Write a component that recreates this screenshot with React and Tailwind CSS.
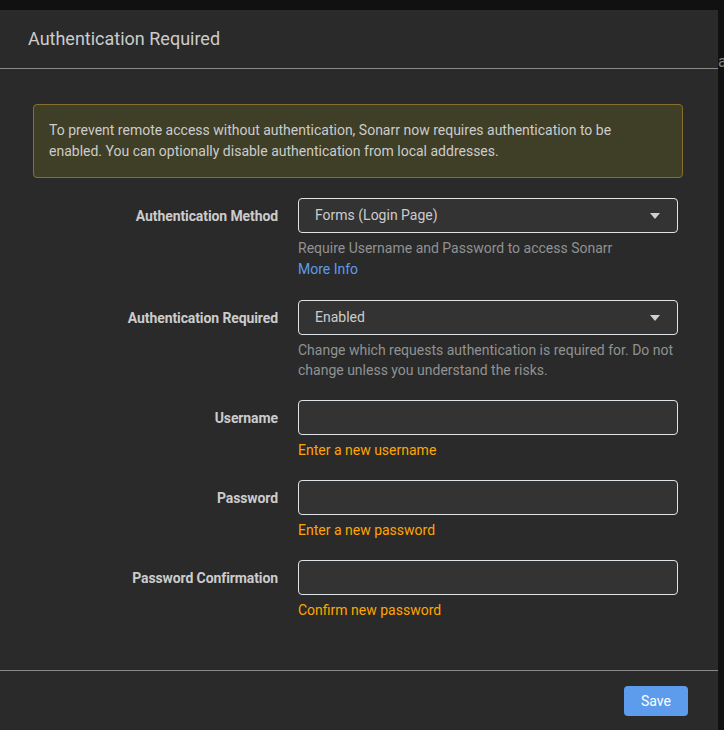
import React from "react";

function Caret() {
  return (
    <svg width="10" height="6" viewBox="0 0 10 6" className="shrink-0">
      <path d="M0 0 L10 0 L5 6 Z" fill="#d0d0d0" />
    </svg>
  );
}

function Row({ label, children }) {
  return (
    <div className="flex mb-[20px]">
      <div className="w-[245px] shrink-0 pt-[1px] text-right font-bold tracking-[-0.1px] text-[#cccccc] leading-[35px] text-[14px]">
        {label}
      </div>
      <div className="ml-[20px] w-[380px]">{children}</div>
    </div>
  );
}

function Select({ value }) {
  return (
    <div className="h-[35px] rounded-[4px] border border-[#dde3e6] bg-[#333333] flex items-center justify-between pl-[16px] pr-[17px] text-[14px] text-[#cccccc]">
      <span>{value}</span>
      <Caret />
    </div>
  );
}

function Input() {
  return <div className="h-[35px] rounded-[4px] border border-[#dde3e6] bg-[#333333]" />;
}

function Help({ children, className = "" }) {
  return <div className={`mt-[5px] text-[14px] leading-[20px] ${className}`}>{children}</div>;
}

export default function App() {
  return (
    <div
      className="w-[724px] h-[730px] overflow-hidden bg-[#111111] pt-[10px] flex"
      style={{ fontFamily: "Roboto, 'Liberation Sans', sans-serif" }}
    >
      <div className="w-[718px] shrink-0 bg-[#2a2a2a] flex flex-col">
        <div className="h-[59px] flex items-center pl-[28px] pb-[2px] border-b border-[#8a8a8a] text-[18px] text-[#cccccc]">
          Authentication Required
        </div>
        <div className="pt-[35px] pl-[33px] pb-[30px]">
          <div className="w-[650px] rounded-[4px] border border-[#87702e] bg-[#3f3e27] px-[15px] py-[15px] text-[14px] leading-[21px] text-[#cccccc]">
            To prevent remote access without authentication, Sonarr now requires authentication to be
            enabled. You can optionally disable authentication from local addresses.
          </div>
          <div className="mt-[20px]">
            <Row label="Authentication Method">
              <Select value="Forms (Login Page)" />
              <Help className="text-[#909293]">
                Require Username and Password to access Sonarr
                <div className="text-[#5d9cec] mt-[1px] leading-[21px]">More Info</div>
              </Help>
            </Row>
            <Row label="Authentication Required">
              <Select value="Enabled" />
              <Help className="text-[#909293]">
                Change which requests authentication is required for. Do not change unless you understand the risks.
              </Help>
            </Row>
            <Row label="Username">
              <Input />
              <Help className="text-[#ffa500]">Enter a new username</Help>
            </Row>
            <Row label="Password">
              <Input />
              <Help className="text-[#ffa500]">Enter a new password</Help>
            </Row>
            <Row label="Password Confirmation">
              <Input />
              <Help className="text-[#ffa500]">Confirm new password</Help>
            </Row>
          </div>
        </div>
        <div className="border-t border-[#8a8a8a] flex justify-end pt-[15px] pr-[30px]">
          <button className="h-[30px] w-[64px] rounded-[4px] bg-[#5d9cec] text-white text-[14px]">
            Save
          </button>
        </div>
      </div>
      <div className="flex-1 overflow-hidden pt-[42px] text-[16px] leading-[20px] text-[#808080]">
        <span className="block">a</span>
      </div>
    </div>
  );
}
